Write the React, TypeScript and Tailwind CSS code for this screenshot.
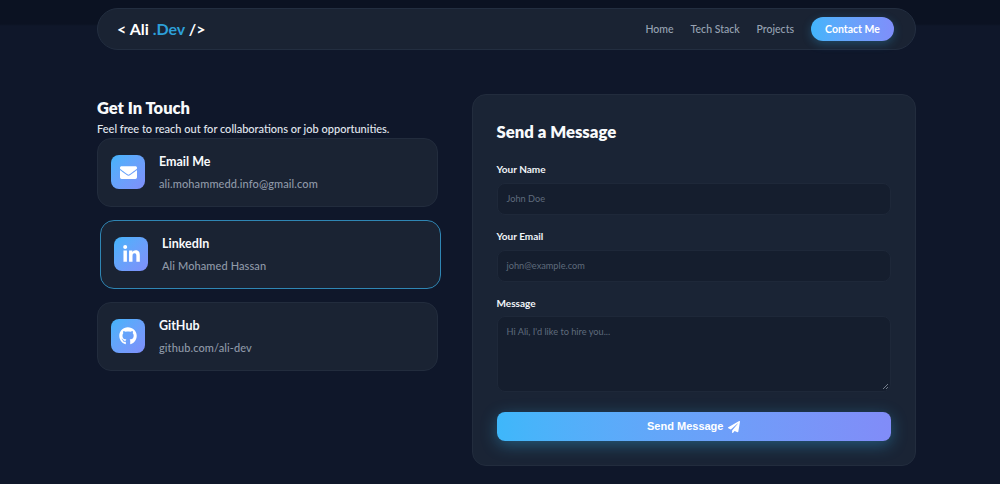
import { FaEnvelope, FaLinkedinIn, FaGithub, FaPaperPlane } from "react-icons/fa";

const font = "font-['Lato','Noto_Sans',sans-serif]";

function Contact({ icon, title, sub, active }: { icon: React.ReactNode; title: string; sub: string; active?: boolean }) {
  return (
    <div
      className={
        "flex h-[68.5px] w-[341px] items-center gap-[14px] rounded-[14px] border pl-[13px] bg-[#1a2333] " +
        (active ? "translate-x-[3px] border-[#2f86b4]" : "border-[#222c3d]")
      }
    >
      <div className="flex h-[34px] w-[34px] items-center justify-center rounded-[8px] bg-gradient-to-br from-[#41b4fb] to-[#7f8efa] text-white">
        {icon}
      </div>
      <div className="flex flex-col gap-[6px]">
        <div className="text-[12.5px] leading-[16px] font-bold text-[#f8fafc]">{title}</div>
        <div className="text-[11px] leading-[15px] font-medium text-[#8f99a8] tracking-[0.1px]">{sub}</div>
      </div>
    </div>
  );
}

function Field({ label, placeholder }: { label: string; placeholder: string }) {
  return (
    <div className="mb-[14px] flex flex-col">
      <label className="mb-[7px] text-[10px] leading-[14px] font-bold text-[#f1f5f9]">{label}</label>
      <div className="flex h-[32px] items-center rounded-[8px] border border-[#1e2839] bg-[#151e2e] pl-[9px] text-[9.2px] text-[#5f6b7c]">
        {placeholder}
      </div>
    </div>
  );
}

export default function App() {
  return (
    <div className={"h-[484px] w-[1000px] overflow-hidden bg-[linear-gradient(#0b1222_24px,#0f172a_26px)] " + font}>
      <div className="ml-[97px] w-[819px] pt-[8px]">
        <nav className="flex h-[42px] items-center justify-between rounded-[21px] border border-[#232e40] bg-[#1a2333] pl-[19px] pr-[21px]">
          <div className="text-[16px] font-bold text-white">
            &lt; Ali <span className="text-[#2d9fd8]">.Dev</span> /&gt;
          </div>
          <div className="flex items-center text-[10.5px] font-medium text-[#98a3b3]">
            <span className="mr-[17px] pt-[1px]">Home</span>
            <span className="mr-[17px] pt-[1px]">Tech Stack</span>
            <span className="mr-[17px] pt-[1px]">Projects</span>
            <span className="flex h-[24px] w-[83px] items-center justify-center rounded-full bg-gradient-to-r from-[#41b4fb] to-[#7f8efa] pt-[1px] text-[10.5px] font-bold text-white shadow-[0_3px_10px_rgba(56,189,248,0.25)]">
              Contact Me
            </span>
          </div>
        </nav>

        <div className="mt-[44px] flex items-start gap-[34px]">
          <div className="w-[341px]">
            <h2 className="mt-[3.5px] text-[16.5px] leading-[20px] font-extrabold text-[#f8fafc]">Get In Touch</h2>
            <p className="mt-[4px] mb-[2.5px] text-[11px] leading-[14px] font-medium text-[#e2e8f0]">
              Feel free to reach out for collaborations or job opportunities.
            </p>
            <div className="flex flex-col gap-[13.5px]">
              <Contact icon={<FaEnvelope className="text-[17px]" />} title="Email Me" sub="ali.mohammedd.info@gmail.com" />
              <Contact icon={<FaLinkedinIn className="text-[19px]" />} title="LinkedIn" sub="Ali Mohamed Hassan" active />
              <Contact icon={<FaGithub className="text-[18px]" />} title="GitHub" sub="github.com/ali-dev" />
            </div>
          </div>

          <div className="h-[372px] w-[444px] rounded-[14px] border border-[#222c3d] bg-[#1a2435] pl-[23.5px] pr-[24px] pt-[26px]">
            <h3 className="mb-[19px] text-[16.7px] leading-[22px] font-extrabold text-[#f8fafc]">Send a Message</h3>
            <Field label="Your Name" placeholder="John Doe" />
            <Field label="Your Email" placeholder="john@example.com" />
            <div className="flex flex-col">
              <label className="mb-[6px] text-[10px] leading-[14px] font-bold text-[#f1f5f9]">Message</label>
              <div className="relative h-[76px] rounded-[8px] border border-[#1e2839] bg-[#151e2e] pl-[9px] pt-[9px] text-[9.2px] leading-[12px] text-[#5f6b7c]">
                Hi Ali, I'd like to hire you...
                <svg className="absolute bottom-[1px] right-[1px]" width="7" height="7" viewBox="0 0 7 7">
                  <path d="M1 6 6 1M4 6 6 4" stroke="#8a94a3" strokeWidth="0.8" />
                </svg>
              </div>
            </div>
            <button className="mt-[20px] flex h-[29px] w-[394.5px] items-center justify-center gap-[5px] rounded-[8px] bg-gradient-to-r from-[#3eb7fa] to-[#818cf8] font-['Liberation_Sans',sans-serif] text-[11px] font-bold text-white shadow-[0_4px_16px_rgba(56,189,248,0.35)]">
              Send Message <FaPaperPlane className="text-[12px]" />
            </button>
          </div>
        </div>
      </div>
    </div>
  );
}
